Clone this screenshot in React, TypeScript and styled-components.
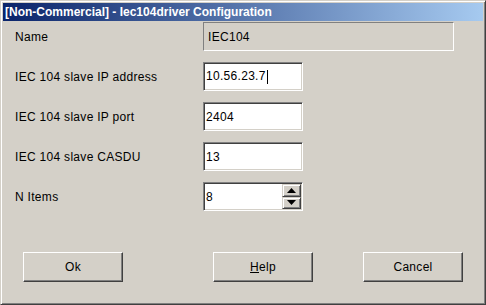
import React from "react";
import styled, { createGlobalStyle } from "styled-components";

const GlobalStyle = createGlobalStyle`
  html, body {
    margin: 0;
    padding: 0;
    background: #d4d0c8;
  }
  * { box-sizing: border-box; }
`;

const Window = styled.div`
  width: 486px;
  height: 305px;
  background: #d4d0c8;
  border: 1px solid;
  border-color: #d4d0c8 #404040 #404040 #d4d0c8;
  box-shadow: inset 1px 1px 0 #ffffff, inset -1px -1px 0 #808080;
  padding: 2px;
  display: flex;
  flex-direction: column;
  font-family: "Liberation Sans", Arial, sans-serif;
  font-size: 12px;
  color: #000;
`;

const TitleBar = styled.div`
  height: 18px;
  flex: none;
  display: flex;
  align-items: center;
  padding-left: 2px;
  background: linear-gradient(to right, #0a246a, #a6caf0);
  color: #ffffff;
  font-weight: bold;
  font-size: 12px;
  white-space: nowrap;
`;

const Body = styled.div`
  display: flex;
  flex-direction: column;
  padding: 1px 0 0 12px;
`;

const Form = styled.div`
  display: grid;
  grid-template-columns: 188px auto;
  grid-auto-rows: 29px;
  row-gap: 11px;
  align-items: center;
`;

const Label = styled.div`
  letter-spacing: 0.3px;
  white-space: nowrap;
`;

const ReadOnlyField = styled.div`
  width: 251px;
  height: 29px;
  border: 1px solid;
  border-color: #808080 #ffffff #ffffff #808080;
  padding-left: 4px;
  display: flex;
  align-items: center;
  letter-spacing: 0.3px;
`;

const TextBox = styled.div`
  width: 100px;
  height: 29px;
  background: #ffffff;
  border: 1px solid;
  border-color: #808080 #ffffff #ffffff #808080;
  box-shadow: inset 1px 1px 0 #404040, inset -1px -1px 0 #d4d0c8;
  padding: 1px 1px 1px 2px;
  display: flex;
  align-items: center;
  letter-spacing: 0.3px;
`;

const Value = styled.span`
  flex: 1;
  white-space: nowrap;
`;

const Caret = styled.span`
  display: inline-block;
  width: 1px;
  height: 14px;
  background: #000;
  vertical-align: middle;
  margin-left: 1px;
`;

const Spinner = styled.div`
  width: 19px;
  align-self: stretch;
  display: flex;
  flex-direction: column;
`;

const SpinButton = styled.div`
  flex: 1;
  background: #d4d0c8;
  border: 1px solid;
  border-color: #d4d0c8 #404040 #404040 #d4d0c8;
  box-shadow: inset 1px 1px 0 #ffffff, inset -1px -1px 0 #808080;
  display: flex;
  align-items: center;
  justify-content: center;
`;

const ButtonRow = styled.div`
  display: flex;
  margin-top: 41px;
  padding-left: 8px;
`;

const Button = styled.div<{ $offset?: number }>`
  width: 100px;
  height: 30px;
  margin-left: ${(p) => p.$offset ?? 0}px;
  background: #d4d0c8;
  border: 1px solid;
  border-color: #ffffff #404040 #404040 #ffffff;
  box-shadow: inset -1px -1px 0 #808080;
  display: flex;
  align-items: center;
  justify-content: center;
  letter-spacing: 0.3px;
  u { text-decoration: underline; }
`;

const Arrow = ({ up }: { up?: boolean }) => (
  <svg width="9" height="5" viewBox="0 0 9 5">
    {up ? (
      <polygon points="4.5,0 9,5 0,5" fill="#000" />
    ) : (
      <polygon points="0,0 9,0 4.5,5" fill="#000" />
    )}
  </svg>
);

export default function App() {
  return (
    <>
      <GlobalStyle />
      <Window>
        <TitleBar>[Non-Commercial] - Iec104driver Configuration</TitleBar>
        <Body>
          <Form>
            <Label>Name</Label>
            <ReadOnlyField>IEC104</ReadOnlyField>

            <Label>IEC 104 slave IP address</Label>
            <TextBox>
              <Value>
                10.56.23.7
                <Caret />
              </Value>
            </TextBox>

            <Label>IEC 104 slave IP port</Label>
            <TextBox>
              <Value>2404</Value>
            </TextBox>

            <Label>IEC 104 slave CASDU</Label>
            <TextBox>
              <Value>13</Value>
            </TextBox>

            <Label>N Items</Label>
            <TextBox>
              <Value>8</Value>
              <Spinner>
                <SpinButton>
                  <Arrow up />
                </SpinButton>
                <SpinButton>
                  <Arrow />
                </SpinButton>
              </Spinner>
            </TextBox>
          </Form>
          <ButtonRow>
            <Button>Ok</Button>
            <Button $offset={90}>
              <span>
                <u>H</u>elp
              </span>
            </Button>
            <Button $offset={50}>Cancel</Button>
          </ButtonRow>
        </Body>
      </Window>
    </>
  );
}
